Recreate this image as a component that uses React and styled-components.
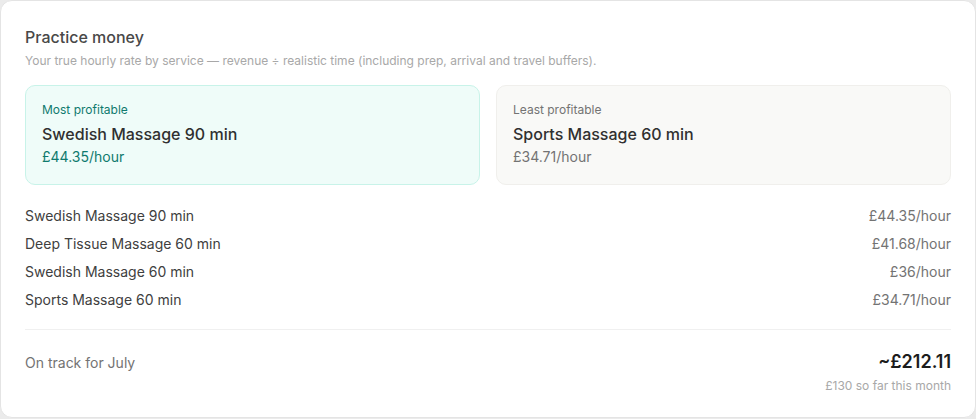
import React from "react";
import styled, { createGlobalStyle } from "styled-components";

const GlobalStyle = createGlobalStyle`
  html, body {
    margin: 0;
    padding: 0;
    background: #ebebeb;
  }
  body {
    font-family: Inter, "Noto Sans", "Liberation Sans", sans-serif;
  }
`;

const Card = styled.section`
  box-sizing: border-box;
  width: 976px;
  height: 418px;
  background: #ffffff;
  border: 1px solid #e4e4e4;
  border-radius: 12px;
  padding: 24px;
  display: flex;
  flex-direction: column;
`;

const Title = styled.h2`
  margin: 0;
  font-size: 16px;
  line-height: 24px;
  font-weight: 500;
  color: #484848;
`;

const Subtitle = styled.p`
  margin: 4px 0 0 0;
  font-size: 12px;
  line-height: 16px;
  color: #a8a8a8;
`;

const Tiles = styled.div`
  display: grid;
  grid-template-columns: 1fr 1fr;
  gap: 16px;
  margin-top: 16px;
`;

const Tile = styled.div`
  box-sizing: border-box;
  height: 100px;
  border-radius: 10px;
  padding: 16px;
  border: 1px solid ${(p) => (p.$best ? "#c8f3e9" : "#f0efec")};
  background: ${(p) => (p.$best ? "#effcf9" : "#f9f9f7")};
  display: flex;
  flex-direction: column;
`;

const TileLabel = styled.div`
  font-size: 12px;
  line-height: 16px;
  color: ${(p) => (p.$best ? "#0f7a6e" : "#737373")};
`;

const TileName = styled.div`
  margin-top: 4px;
  font-size: 16px;
  line-height: 24px;
  font-weight: 500;
  color: #303030;
`;

const TileRate = styled.div`
  margin-top: 1px;
  font-size: 14px;
  line-height: 20px;
  color: ${(p) => (p.$best ? "#0f7a6e" : "#737373")};
`;

const List = styled.div`
  margin-top: 16px;
  display: flex;
  flex-direction: column;
`;

const Row = styled.div`
  display: flex;
  justify-content: space-between;
  align-items: center;
  height: 28px;
  font-size: 14px;
`;

const ServiceName = styled.span`
  color: #404040;
`;

const ServiceRate = styled.span`
  color: #737373;
`;

const Divider = styled.hr`
  margin: 16px 0 0 0;
  border: none;
  border-top: 1px solid #f0f0f0;
`;

const Footer = styled.div`
  margin-top: 18px;
  display: flex;
  justify-content: space-between;
  align-items: baseline;
`;

const FooterLabel = styled.span`
  font-size: 14px;
  color: #737373;
`;

const Projection = styled.div`
  display: flex;
  flex-direction: column;
  align-items: flex-end;
`;

const ProjectionValue = styled.span`
  font-size: 18px;
  line-height: 28px;
  font-weight: 600;
  color: #1c1c1c;
`;

const ProjectionNote = styled.span`
  margin-top: 2px;
  font-size: 12px;
  line-height: 16px;
  color: #a8a8a8;
`;

const services = [
  { name: "Swedish Massage 90 min", rate: "£44.35/hour" },
  { name: "Deep Tissue Massage 60 min", rate: "£41.68/hour" },
  { name: "Swedish Massage 60 min", rate: "£36/hour" },
  { name: "Sports Massage 60 min", rate: "£34.71/hour" },
];

function App() {
  return (
    <>
      <GlobalStyle />
      <Card>
        <Title>Practice money</Title>
        <Subtitle>
          Your true hourly rate by service — revenue ÷ realistic time (including
          prep, arrival and travel buffers).
        </Subtitle>
        <Tiles>
          <Tile $best>
            <TileLabel $best>Most profitable</TileLabel>
            <TileName>Swedish Massage 90 min</TileName>
            <TileRate $best>£44.35/hour</TileRate>
          </Tile>
          <Tile>
            <TileLabel>Least profitable</TileLabel>
            <TileName>Sports Massage 60 min</TileName>
            <TileRate>£34.71/hour</TileRate>
          </Tile>
        </Tiles>
        <List>
          {services.map((s) => (
            <Row key={s.name}>
              <ServiceName>{s.name}</ServiceName>
              <ServiceRate>{s.rate}</ServiceRate>
            </Row>
          ))}
        </List>
        <Divider />
        <Footer>
          <FooterLabel>On track for July</FooterLabel>
          <Projection>
            <ProjectionValue>~£212.11</ProjectionValue>
            <ProjectionNote>£130 so far this month</ProjectionNote>
          </Projection>
        </Footer>
      </Card>
    </>
  );
}

export default App;
